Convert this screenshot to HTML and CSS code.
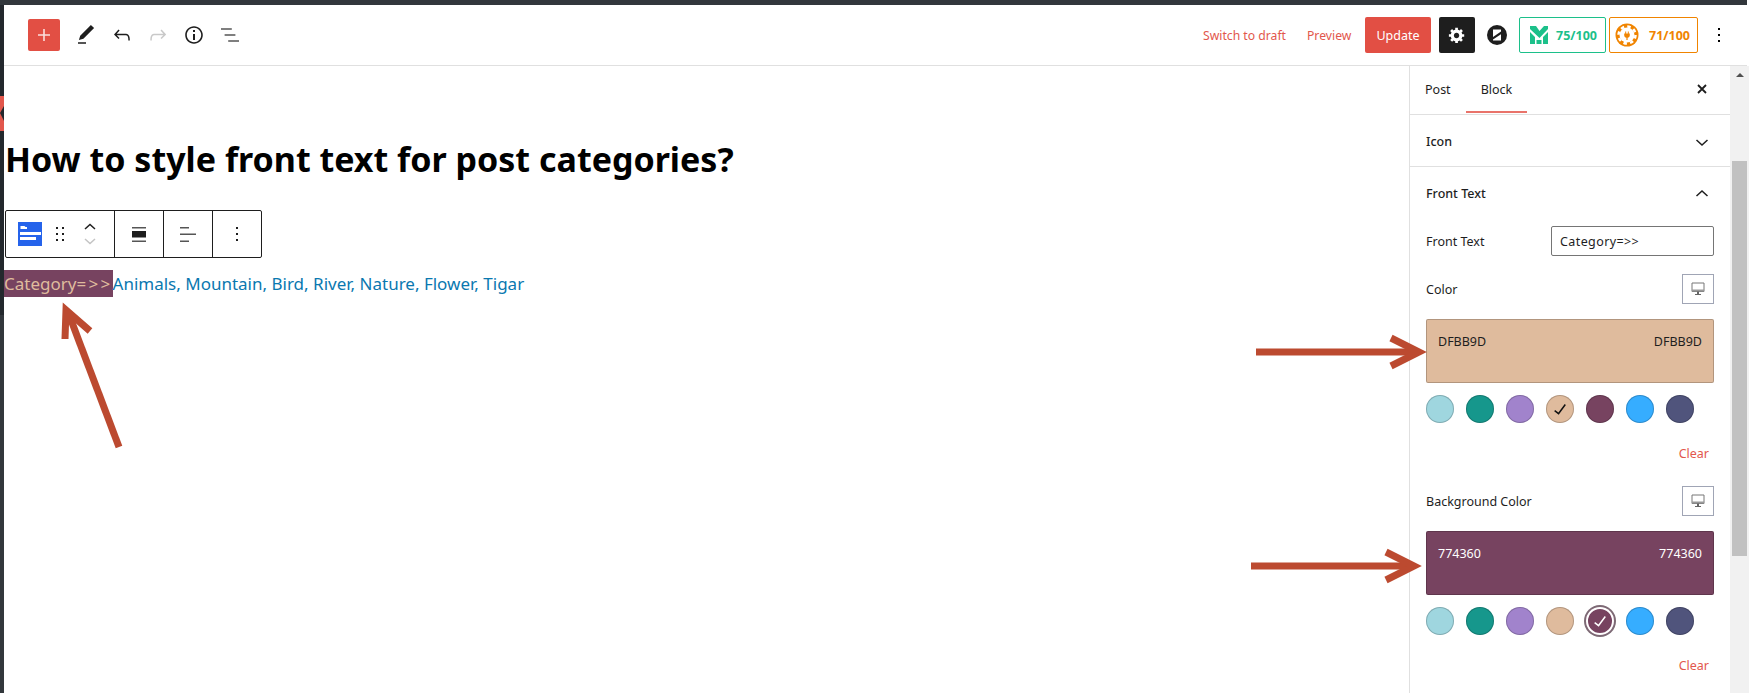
FILE: index.html
```html
<!DOCTYPE html>
<html lang="en">
<head>
    <meta charset="UTF-8">
    <meta name="viewport" content="width=device-width, initial-scale=1.0">
    <title>How to style front text for post categories?</title>
    <link rel="stylesheet" href="styles.css">
</head>
<body>

    <div class="admin-bar"></div>

    <div class="layout">
        <div class="strip">
            <div class="strip-top">
                <svg class="strip-logo" viewBox="0 0 4 35"><path d="M0 0h4v10L0 17l4 8v10H0z" fill="#e2574c"/></svg>
            </div>
        </div>

        <div class="main">
            <header class="topbar">
                <div class="tools">
                    <button class="add-btn">
                        <svg viewBox="0 0 24 24" width="24" height="24"><path d="M18 11.2h-5.2V6h-1.6v5.2H6v1.6h5.2V18h1.6v-5.2H18z" fill="#fbdedc"/></svg>
                    </button>
                    <button class="tool"><svg viewBox="0 0 24 24" width="24" height="24"><path d="M20.1 5.1L16.9 2 6.2 12.7l-1.3 4.4 4.5-1.3L20.1 5.1zM4 20.8h8v-1.5H4v1.5z"/></svg></button>
                    <button class="tool"><svg viewBox="0 0 24 24" width="24" height="24"><path d="M18.3 11.7c-.6-.6-1.4-.9-2.3-.9H6.7l2.9-3.3-1.1-1-4.5 5L8.5 16l1-1-2.7-2.7H16c.5 0 .9.2 1.3.5 1 1 1 3.4 1 4.5v.3h1.5v-.2c0-1.5 0-4.3-1.5-5.7z"/></svg></button>
                    <button class="tool tool-off"><svg viewBox="0 0 24 24" width="24" height="24"><path d="M15.6 6.5l-1.1 1 2.9 3.3H8c-.9 0-1.7.3-2.3.9-1.4 1.5-1.4 4.2-1.4 5.6v.2h1.5v-.3c0-1.1 0-3.5 1-4.5.3-.3.7-.5 1.3-.5h9.2L14.5 15l1.1 1.1 4.6-4.6-4.6-5z"/></svg></button>
                    <button class="tool"><svg viewBox="0 0 24 24" width="24" height="24"><path d="M12 3.2c-4.8 0-8.8 3.9-8.8 8.8 0 4.8 3.9 8.8 8.8 8.8 4.8 0 8.8-3.9 8.8-8.8 0-4.8-4-8.8-8.8-8.8zm0 16c-4 0-7.2-3.3-7.2-7.2C4.8 8 8 4.8 12 4.8s7.2 3.3 7.2 7.2c0 4-3.2 7.2-7.2 7.2zM11 17h2v-6h-2v6zm0-8h2V7h-2v2z"/></svg></button>
                    <button class="tool"><svg viewBox="0 0 24 24" width="24" height="24"><path d="M13.8 5.2H3v1.5h10.8V5.2zm-3.6 12v1.5H21v-1.5H10.2zm7.2-6H6.6v1.5h10.8v-1.5z" fill="#555"/></svg></button>
                </div>

                <div class="actions">
                    <a class="link-draft">Switch to draft</a>
                    <a class="link-preview">Preview</a>
                    <button class="update-btn">Update</button>
                    <button class="settings-btn">
                        <svg viewBox="0 0 20 20" width="18" height="18"><path d="M18 12h-2.18c-.17.7-.44 1.35-.81 1.93l1.54 1.54-2.1 2.1-1.54-1.54c-.58.36-1.23.63-1.91.79V19H8v-2.18c-.68-.16-1.33-.43-1.91-.79l-1.54 1.54-2.12-2.12 1.54-1.54c-.36-.58-.63-1.23-.79-1.91H1V9.03h2.17c.16-.7.44-1.35.8-1.94L2.43 5.55l2.1-2.1 1.54 1.54c.58-.37 1.24-.64 1.93-.81V2h3v2.18c.68.16 1.33.43 1.91.79l1.54-1.54 2.12 2.12-1.54 1.54c.36.59.64 1.24.8 1.94H18V12zm-8.5 1.5c1.66 0 3-1.34 3-3s-1.34-3-3-3-3 1.34-3 3 1.34 3 3 3z" fill="#fff"/></svg>
                    </button>
                    <svg class="z-icon" viewBox="0 0 20 20" width="20" height="20">
                        <circle cx="10" cy="10" r="10" fill="#1e1e1e"/>
                        <path d="M6 4.500h8v2L6 12zM14 9.200L6 14.500V15.500h8z" fill="#fff"/>
                    </svg>
                    <div class="score score-green">
                        <svg viewBox="0 0 20 20" width="20" height="20">
                            <path d="M1 1h6l3.500 5L15 1h4v3l-8.500 9L1 4zM1 7l5 5v7H1zM19 7v12h-5v-7zM7.500 15h5v4h-5z" fill="#1cc08a"/>
                        </svg>
                        <span>75/100</span>
                    </div>
                    <div class="score score-orange">
                        <svg viewBox="0 0 24 24" width="24" height="24">
                            <circle cx="12" cy="12" r="11.500" fill="#f08400"/>
                            <circle cx="12" cy="12" r="7.500" fill="#fff"/>
                            <circle cx="12" cy="12" r="8.500" fill="none" stroke="#fff" stroke-width="2.500" stroke-dasharray="3.500 3.176"/>
                            <path d="M10.200 8.500h1v2h1.600v-2h1v2h1v1.800c0 1.400-1 2.300-2.200 2.500V17h-1.200v-2.200c-1.200-.2-2.200-1.100-2.200-2.500v-1.800h1z" fill="#f08400"/>
                        </svg>
                        <span>71/100</span>
                    </div>
                    <button class="more-btn">
                        <svg viewBox="0 0 24 24" width="24" height="24"><path d="M13 19h-2v-2h2v2zm0-6h-2v-2h2v2zm0-6h-2V5h2v2z"/></svg>
                    </button>
                </div>
            </header>

            <div class="content">
                <section class="editor">
                    <h1 class="post-title">How to style front text for post categories?</h1>

                    <div class="block-toolbar">
                        <div class="bt-group bt-first">
                            <svg viewBox="0 0 24 24" width="24" height="24">
                                <rect width="24" height="24" fill="#2563eb"/>
                                <path d="M2 10h21v3H2zM2 15h16v3H2z" fill="#fff"/>
                                <path d="M2.500 4h4l1 1h1.500v2H2.500z" fill="#fff"/>
                            </svg>
                            <svg class="bt-drag" viewBox="0 0 8 14" width="8" height="14"><path d="M0 0h2v2H0zM6 0h2v2H6zM0 6h2v2H0zM6 6h2v2H6zM0 12h2v2H0zM6 12h2v2H6z" fill="#1e1e1e"/></svg>
                            <div class="bt-move">
                                <svg viewBox="0 0 12 7" width="12" height="7"><path d="M1 6l5-4.500L11 6" fill="none" stroke="#1e1e1e" stroke-width="1.500"/></svg>
                                <svg viewBox="0 0 12 7" width="12" height="7"><path d="M1 1l5 4.500L11 1" fill="none" stroke="#c4c4c4" stroke-width="1.500"/></svg>
                            </div>
                        </div>
                        <div class="bt-group">
                            <svg viewBox="0 0 14 15" width="14" height="15"><path d="M0 0h14v1.500H0zM0 13.500h14V15H0z" fill="#555"/><path d="M0 4h14v6.500H0z" fill="#1e1e1e"/></svg>
                        </div>
                        <div class="bt-group">
                            <svg viewBox="0 0 16 15" width="16" height="15"><path d="M0 0h9v1.500H0zM0 6.500h16V8H0zM0 13.500h9V15H0z" fill="#555"/></svg>
                        </div>
                        <div class="bt-group bt-last">
                            <svg viewBox="0 0 24 24" width="24" height="24"><path d="M13 19h-2v-2h2v2zm0-6h-2v-2h2v2zm0-6h-2V5h2v2z" fill="#1e1e1e"/></svg>
                        </div>
                    </div>

                    <p class="post-terms"><span class="front-text">Category<span class="front-arrows">=&gt;&gt;</span></span><a>Animals</a>, <a>Mountain</a>, <a>Bird</a>, <a>River</a>, <a>Nature</a>, <a>Flower</a>, <a>Tigar</a></p>
                </section>

                <aside class="sidebar">
                    <div class="tabs">
                        <div class="tab">Post</div>
                        <div class="tab tab-active">Block</div>
                        <svg class="tab-close" viewBox="0 0 10 10" width="10" height="10"><path d="M1 1l8 8M9 1L1 9" fill="none" stroke="#1e1e1e" stroke-width="1.800"/></svg>
                    </div>

                    <div class="panel-closed">
                        <span>Icon</span>
                        <svg viewBox="0 0 24 24" width="24" height="24"><path d="M17.500 10l-5.500 5-5.500-5" fill="none" stroke="#1e1e1e" stroke-width="1.500"/></svg>
                    </div>

                    <div class="panel">
                        <div class="panel-head">
                            <span>Front Text</span>
                            <svg viewBox="0 0 24 24" width="24" height="24"><path d="M6.500 14l5.500-5 5.500 5" fill="none" stroke="#1e1e1e" stroke-width="1.500"/></svg>
                        </div>

                        <div class="field-row">
                            <label>Front Text</label>
                            <input class="text-input" type="text" value="Category=>>">
                        </div>

                        <div class="color-field">
                            <div class="color-label">
                                <span>Color</span>
                                <button class="device-btn">
                                    <svg viewBox="0 0 14 14" width="14" height="14"><path d="M1 1h12v8.500H1z" fill="none" stroke="#777" stroke-width="1"/><path d="M1 7.500h12v2H1z" fill="#999"/><path d="M6 9.500h2V12H6zM4 12h6v1H4z" fill="#666"/></svg>
                                </button>
                            </div>
                            <div class="color-box box-tan"><span>DFBB9D</span><span>DFBB9D</span></div>
                            <div class="swatches">
                                <span class="swatch c-sky"></span>
                                <span class="swatch c-teal"></span>
                                <span class="swatch c-purple"></span>
                                <span class="swatch c-tan">
                                    <svg viewBox="0 0 24 24" width="24" height="24"><path d="M16.700 7.100l-6.300 8.500-3.300-2.500-.9 1.200 4.500 3.400L17.900 8z" fill="#111"/></svg>
                                </span>
                                <span class="swatch c-plum"></span>
                                <span class="swatch c-blue"></span>
                                <span class="swatch c-navy"></span>
                            </div>
                            <div class="clear-row"><a>Clear</a></div>
                        </div>

                        <div class="color-field">
                            <div class="color-label">
                                <span>Background Color</span>
                                <button class="device-btn">
                                    <svg viewBox="0 0 14 14" width="14" height="14"><path d="M1 1h12v8.500H1z" fill="none" stroke="#777" stroke-width="1"/><path d="M1 7.500h12v2H1z" fill="#999"/><path d="M6 9.500h2V12H6zM4 12h6v1H4z" fill="#666"/></svg>
                                </button>
                            </div>
                            <div class="color-box box-plum"><span>774360</span><span>774360</span></div>
                            <div class="swatches">
                                <span class="swatch c-sky"></span>
                                <span class="swatch c-teal"></span>
                                <span class="swatch c-purple"></span>
                                <span class="swatch c-tan"></span>
                                <span class="swatch c-plum swatch-ring">
                                    <svg viewBox="0 0 24 24" width="24" height="24"><path d="M16.700 7.100l-6.300 8.500-3.300-2.500-.9 1.200 4.500 3.400L17.900 8z" fill="#fff"/></svg>
                                </span>
                                <span class="swatch c-blue"></span>
                                <span class="swatch c-navy"></span>
                            </div>
                            <div class="clear-row"><a>Clear</a></div>
                        </div>
                    </div>
                </aside>

                <div class="scrollbar">
                    <span class="scroll-up"></span>
                    <div class="scroll-thumb"></div>
                </div>
            </div>
        </div>
    </div>

    <!-- annotation arrows drawn over the screenshot -->
    <svg class="arrows" viewBox="0 0 1749 693" width="1749" height="693">
        <g fill="none" stroke="#bc4a30">
            <path d="M119 447L68 312" stroke-width="7"/>
            <path d="M65 339L66 310L90 331" stroke-width="7"/>
            <path d="M1256 352H1419" stroke-width="7"/>
            <path d="M1391 338L1419 352L1391 366" stroke-width="7"/>
            <path d="M1251 566H1414" stroke-width="7"/>
            <path d="M1386 552L1414 566L1386 580" stroke-width="7"/>
        </g>
    </svg>

</body>
</html>
```

FILE: styles.css
```css
* {
    box-sizing: border-box;
}

body {
    margin: 0;
    height: 693px;
    overflow: hidden;
    background-color: #fff;
    color: #1e1e1e;
    font-family: "Noto Sans", "Open Sans", sans-serif;
    font-size: 12.5px;
}

button {
    padding: 0;
    border: none;
    background: none;
    font-family: inherit;
    display: flex;
    align-items: center;
    justify-content: center;
}

.admin-bar {
    height: 5px;
    margin-right: 2px;
    background-color: #32373c;
}

.layout {
    display: flex;
    height: 688px;
}

.strip {
    width: 4px;
    flex-shrink: 0;
    background-color: #32373c;
}

.strip-top {
    height: 310px;
    padding-top: 91px;
    background-color: #23282d;
}

.strip-logo {
    display: block;
    width: 4px;
    height: 35px;
}

.main {
    flex: 1;
    min-width: 0;
    display: flex;
    flex-direction: column;
}

/* top bar */
.topbar {
    height: 61px;
    flex-shrink: 0;
    margin-right: 2px;
    padding: 0 9px 0 24px;
    display: flex;
    align-items: center;
    justify-content: space-between;
    border-bottom: 1px solid #e0e0e0;
}

.tools {
    display: flex;
    align-items: center;
}

.add-btn {
    width: 32px;
    height: 32px;
    margin-right: 8px;
    border-radius: 2px;
    background-color: #e24f44;
}

.tool {
    width: 36px;
    height: 36px;
}

.tool svg {
    fill: #1e1e1e;
}

.tool-off svg {
    fill: #c9c9c9;
}

.actions {
    display: flex;
    align-items: center;
}

.link-draft,
.link-preview {
    color: #e2574c;
    font-size: 12.2px;
}

.link-draft {
    width: 104px;
}

.link-preview {
    width: 58px;
}

.update-btn {
    width: 66px;
    height: 36px;
    margin-right: 8px;
    border-radius: 2px;
    background-color: #e24f44;
    color: #fff;
    font-size: 12.5px;
}

.settings-btn {
    width: 36px;
    height: 36px;
    margin-right: 12px;
    border-radius: 2px;
    background-color: #1e1e1e;
}

.z-icon {
    margin-right: 12px;
}

.score {
    height: 36px;
    display: flex;
    align-items: center;
    border-radius: 2px;
    font-weight: 700;
    font-size: 12.5px;
}

.score-green {
    width: 87px;
    margin-right: 3px;
    padding-left: 9px;
    gap: 7px;
    border: 1px solid #1cc08a;
    color: #1cc08a;
}

.score-orange {
    width: 89px;
    padding-left: 5px;
    gap: 10px;
    border: 1px solid #f08400;
    color: #f08400;
}

.more-btn {
    width: 38px;
    height: 36px;
    margin-left: 2px;
}

/* editor */
.content {
    flex: 1;
    min-height: 0;
    display: flex;
}

.editor {
    width: 1406px;
    flex-shrink: 0;
    border-right: 1px solid #e0e0e0;
}

.post-title {
    margin: 71px 0 29px 1px;
    color: #000;
    font-size: 34px;
    line-height: 44px;
    font-weight: 700;
}

.block-toolbar {
    width: 257px;
    height: 48px;
    margin-left: 1px;
    display: flex;
    border: 1px solid #1e1e1e;
    border-radius: 2px;
}

.bt-group {
    width: 49px;
    display: flex;
    align-items: center;
    justify-content: center;
    border-right: 1px solid #1e1e1e;
}

.bt-first {
    width: 109px;
    justify-content: flex-start;
    padding-left: 12px;
}

.bt-last {
    width: 48px;
    border-right: none;
}

.bt-drag {
    margin-left: 14px;
}

.bt-move {
    margin-left: 20px;
    display: flex;
    flex-direction: column;
    gap: 8px;
}

.post-terms {
    margin: 12px 0 0;
    color: #0a78b0;
    font-size: 17px;
    line-height: 27px;
}

.post-terms a {
    color: #0a78b0;
}

.front-text {
    display: inline-block;
    height: 27px;
    background-color: #774360;
    color: #dfbb9d;
}

.front-arrows {
    letter-spacing: 2.3px;
}

/* sidebar */
.sidebar {
    width: 320px;
    flex-shrink: 0;
}

.tabs {
    height: 49px;
    padding-left: 15px;
    display: flex;
    position: relative;
    border-bottom: 1px solid #e0e0e0;
}

.tab {
    height: 47px;
    margin-right: 30px;
    line-height: 48px;
    position: relative;
}

.tab-active::after {
    content: "";
    position: absolute;
    left: -15px;
    right: -15px;
    bottom: 0;
    height: 2px;
    background-color: #e9736a;
}

.tab-close {
    position: absolute;
    right: 23px;
    top: 18px;
}

.panel-closed,
.panel-head {
    display: flex;
    align-items: center;
    justify-content: space-between;
    padding: 0 16px;
    font-weight: 500;
}

.panel-closed {
    height: 52px;
    padding-top: 2px;
    border-bottom: 1px solid #e0e0e0;
}

.panel {
    padding-bottom: 16px;
}

.panel-head {
    height: 53px;
}

.field-row {
    height: 30px;
    margin: 6px 16px 18px;
    display: flex;
    align-items: center;
    justify-content: space-between;
}

.text-input {
    width: 163px;
    height: 30px;
    padding: 0 8px;
    border: 1px solid #757575;
    border-radius: 2px;
    color: #1e1e1e;
    font-family: inherit;
    font-size: 12.5px;
    letter-spacing: 0.4px;
}

.color-field {
    margin: 0 16px;
}

.color-label {
    height: 30px;
    display: flex;
    align-items: center;
    justify-content: space-between;
}

.device-btn {
    width: 32px;
    height: 30px;
    border: 1px solid #a0a5b5;
}

.color-box {
    height: 64px;
    margin-top: 15px;
    padding: 13px 11px;
    display: flex;
    justify-content: space-between;
    border: 1px solid rgba(0, 0, 0, 0.2);
    border-radius: 2px;
    line-height: 18px;
}

.box-tan {
    background-color: #dfbb9d;
}

.box-plum {
    background-color: #774360;
    color: #fff;
}

.swatches {
    margin-top: 12px;
    display: flex;
    gap: 12px;
}

.swatch {
    width: 28px;
    height: 28px;
    display: flex;
    align-items: center;
    justify-content: center;
    border-radius: 50%;
    box-shadow: inset 0 0 0 1px rgba(0, 0, 0, 0.2);
}

.swatch-ring {
    box-shadow: inset 0 0 0 2px #fff, 0 0 0 2px #7d6a75;
}

.c-sky { background-color: #9fd6df; }
.c-teal { background-color: #16978c; }
.c-purple { background-color: #a183cc; }
.c-tan { background-color: #dfbb9d; }
.c-plum { background-color: #774360; }
.c-blue { background-color: #36adff; }
.c-navy { background-color: #50547c; }

.clear-row {
    height: 63px;
    padding: 22px 5px 0 0;
    text-align: right;
    line-height: 18px;
    color: #e2574c;
}

/* fake scrollbar */
.scrollbar {
    width: 19px;
    flex-shrink: 0;
    background-color: #f1f1f1;
    padding: 7px 2px 0;
}

.scroll-up {
    display: block;
    width: 0;
    margin: 0 auto;
    border-left: 4px solid transparent;
    border-right: 4px solid transparent;
    border-bottom: 4px solid #505050;
}

.scroll-thumb {
    height: 395px;
    margin-top: 84px;
    background-color: #c1c1c1;
}

.arrows {
    position: absolute;
    top: 0;
    left: 0;
    pointer-events: none;
}
```
